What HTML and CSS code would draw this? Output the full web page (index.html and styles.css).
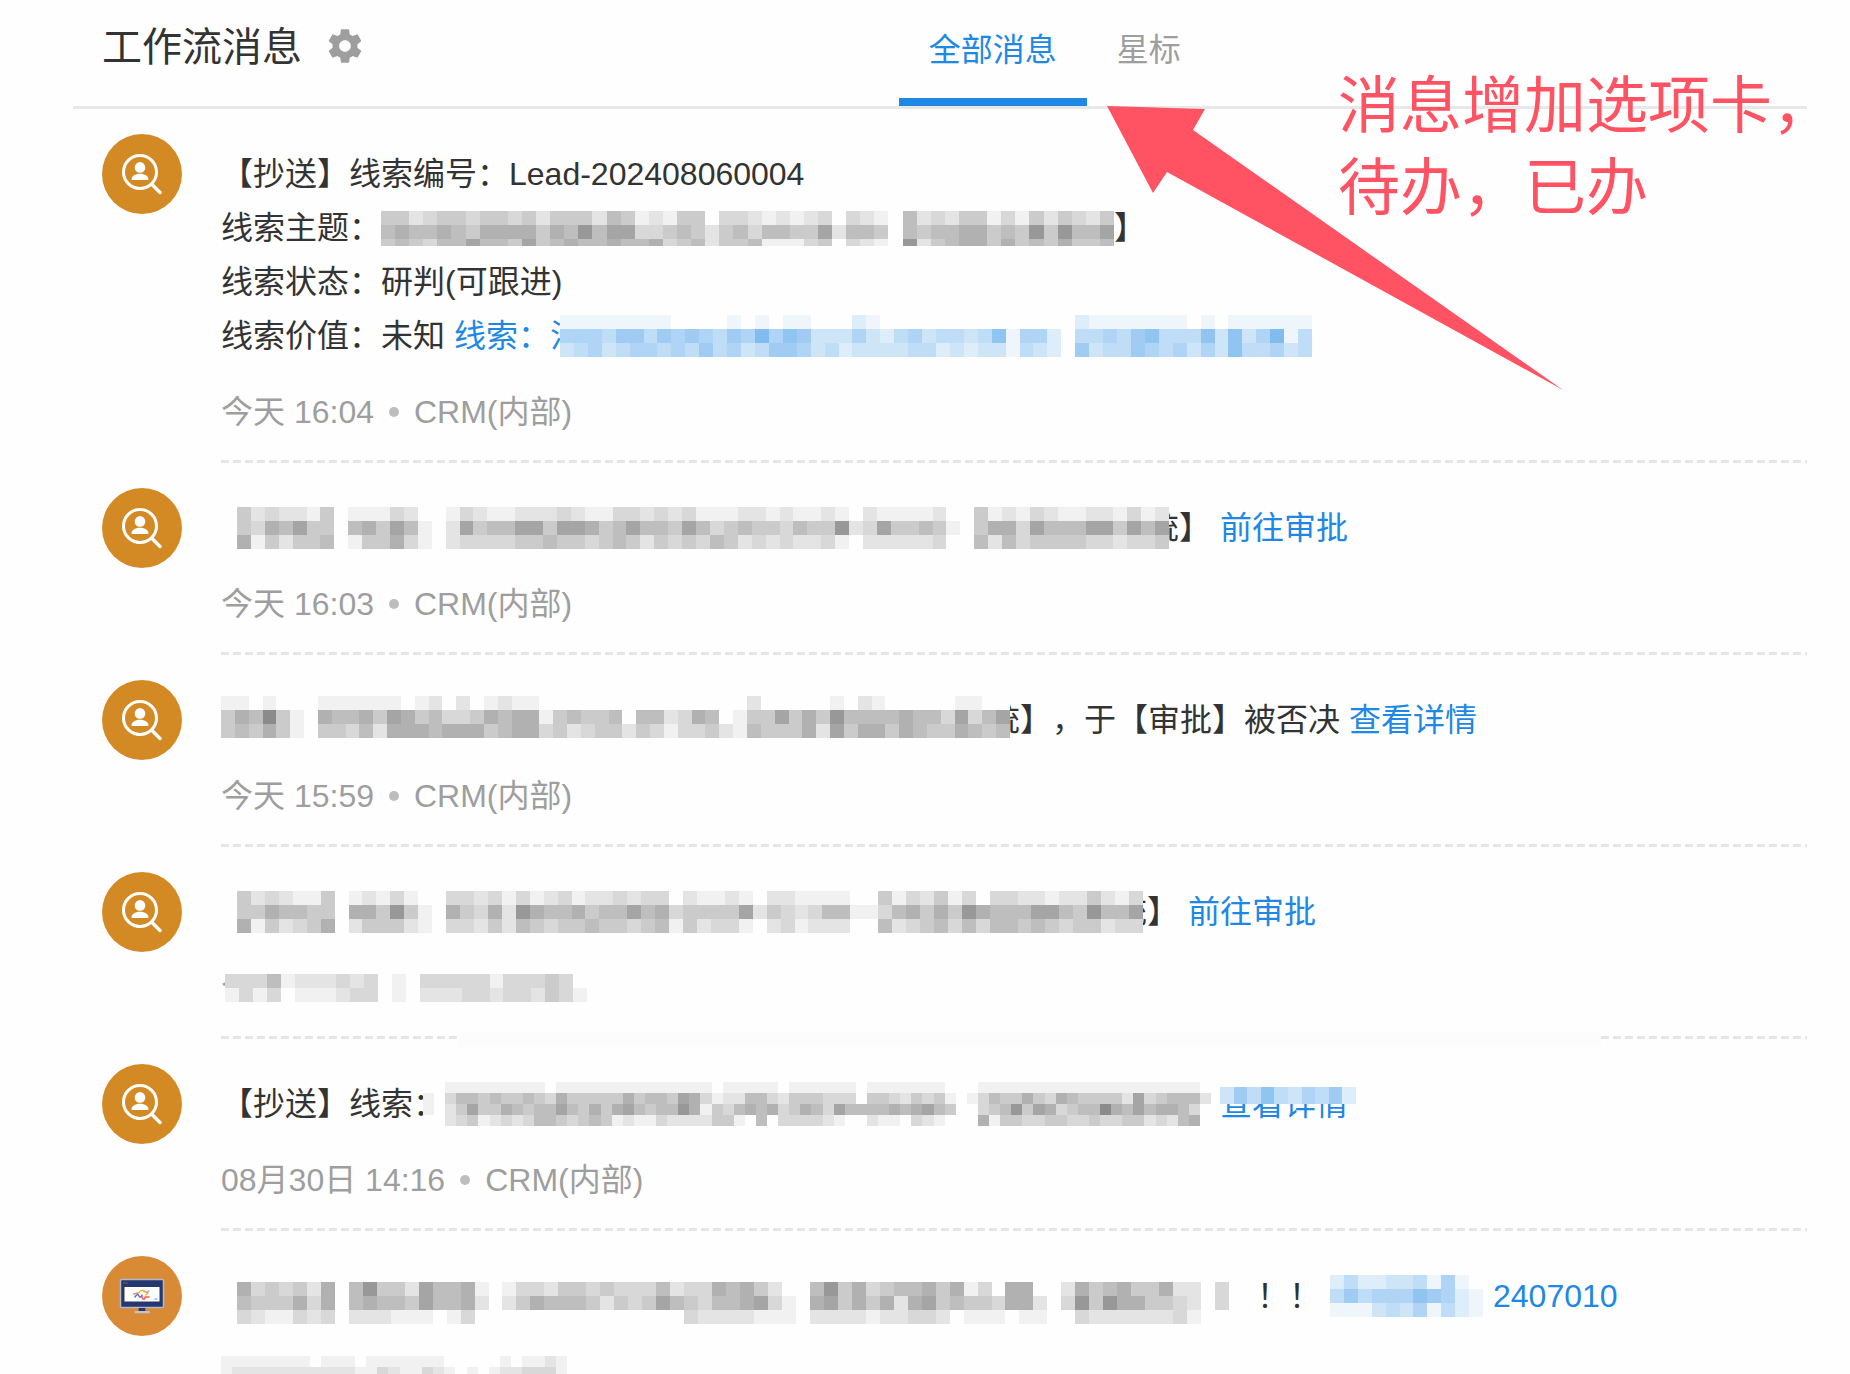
FILE: index.html
```
<!DOCTYPE html>
<html lang="zh-CN">
<head>
    <meta charset="UTF-8">
    <meta name="viewport" content="width=device-width, initial-scale=1.0">
    <title>工作流消息</title>
    <link rel="stylesheet" href="styles.css">
</head>
<body>
    <svg class="defs" aria-hidden="true">
        <symbol id="icon-lead" viewBox="0 0 80 80">
            <circle cx="40" cy="40" r="40" fill="#d38a25"/>
            <circle cx="38" cy="38" r="16.500" fill="none" stroke="#fff" stroke-width="3"/>
            <path d="M50 50.500l8 8" stroke="#fff" stroke-width="3.400" stroke-linecap="round"/>
            <circle cx="38" cy="33.400" r="5.300" fill="#fff"/>
            <path d="M29.600 46v-1c0-3.600 5-5.300 8.400-5.300s8.400 1.700 8.400 5.300v1z" fill="#fff"/>
        </symbol>
    </svg>

    <div class="panel">
        <header class="header">
            <div class="header-left">
                <h1>工作流消息</h1>
                <button type="button" class="btn-setting" aria-label="设置">
                    <svg viewBox="0 0 24 24" width="40" height="40">
                        <path fill="#9e9e9e" d="M19.430 12.980c.04-.32.07-.64.07-.98s-.03-.66-.07-.98l2.110-1.650c.19-.15.24-.42.12-.64l-2-3.460c-.12-.22-.39-.3-.61-.22l-2.490 1c-.52-.4-1.080-.73-1.690-.98l-.38-2.650C14.460 2.180 14.250 2 14 2h-4c-.25 0-.46.18-.49.42l-.38 2.650c-.61.25-1.170.59-1.690.98l-2.490-1c-.23-.09-.49 0-.61.22l-2 3.460c-.13.22-.07.49.12.64l2.110 1.650c-.04.32-.07.65-.07.98s.03.66.07.98l-2.110 1.650c-.19.15-.24.42-.12.64l2 3.460c.12.22.39.3.61.22l2.490-1c.52.4 1.080.73 1.690.98l.38 2.650c.03.24.24.42.49.42h4c.25 0 .46-.18.49-.42l.38-2.650c.61-.25 1.170-.59 1.690-.98l2.490 1c.23.09.49 0 .61-.22l2-3.460c.12-.22.07-.49-.12-.64l-2.110-1.650zM12 15.500c-1.930 0-3.500-1.570-3.500-3.500s1.570-3.500 3.500-3.500 3.500 1.570 3.500 3.500-1.570 3.500-3.500 3.500z"/>
                    </svg>
                </button>
            </div>
            <nav class="tabs">
                <button type="button" class="tab active">全部消息</button>
                <button type="button" class="tab">星标</button>
            </nav>
        </header>

        <ul class="list">
            <li class="item">
                <svg class="avatar"><use href="#icon-lead"/></svg>
                <div class="item-body">
                    <p class="line">【抄送】线索编号：Lead-202408060004</p>
                    <p class="line">线索主题：<svg class="mosaic" data-width="733" data-heights="14,14,7" data-rows="44234434434244425412144.33212123.321.523244131424324|565565466664658577334542453554472554.545566454848557|45435575547456556556345244511134.321.824566464546445"></svg>】</p>
                    <p class="line">线索状态：研判(可跟进)</p>
                    <p class="line">线索价值：未知<a href="#">线索：<span class="under under-start">江</span><svg class="mosaic blue" data-width="752" data-heights="14,14,14" data-rows="11111111....1.1.11...21..............21111111.1.111111|555466465654658576333532453443471552.44546744473735814|345345545464534665342333344232331432.63446545353744534"></svg></a></p>
                    <p class="meta">今天 16:04<i class="dot"></i>CRM(内部)</p>
                </div>
            </li>
            <li class="item">
                <svg class="avatar"><use href="#icon-lead"/></svg>
                <div class="item-body">
                    <p class="line indent"><svg class="mosaic" data-width="932" data-heights="14,14,14" data-rows="4232214.11132..13211222321133232311122121121.211112..41213211221312|4365744.564751.2745577477645755475345443544823744541.46637555774757|6142445.144631.23333445443454243435423232231.222223..52534444332334"></svg><span class="under">统</span>】<a href="#">前往审批</a></p>
                    <p class="meta">今天 16:03<i class="dot"></i>CRM(内部)</p>
                </div>
            </li>
            <li class="item">
                <svg class="avatar"><use href="#icon-lead"/></svg>
                <div class="item-body">
                    <p class="line"><svg class="mosaic" data-width="789" data-heights="14,14,14,7" data-rows="11.1...111111.12.2.1211...............2.....1.21.....11..|465941.6556476453346566145445.552365.14474648555565537357|454641.44352666566645663423442431334215444627466465446545|."></svg><span class="under">统</span>】，于【审批】被否决<a href="#">查看详情</a></p>
                    <p class="meta">今天 15:59<i class="dot"></i>CRM(内部)</p>
                </div>
            </li>
            <li class="item smudged">
                <svg class="avatar"><use href="#icon-lead"/></svg>
                <div class="item-body">
                    <p class="line indent"><svg class="mosaic" data-width="906" data-heights="14,14,14" data-rows="4232114.12131..3323131231223233.21121.221111..4132413.33221224213|4465544.664841.6436286556455756344447243235511356464865557754855 7|6142346.244421.3324254344544345142331.231222..5234535355454344233"></svg><span class="under under-thin">统</span>】<a href="#">前往审批</a></p>
                    <p class="meta"><span class="under under-thin under-start">今</span><svg class="mosaic" data-width="362" data-heights="7,14,14,7" data-rows="..........................|33351222323.1.33333133343.|1313.111233.1.222332332431|."></svg></p>
                </div>
            </li>
            <li class="item">
                <svg class="avatar"><use href="#icon-lead"/></svg>
                <div class="item-body">
                    <p class="line">【抄送】线索<span class="under under-start">：</span><svg class="mosaic" data-width="788" data-heights="11,11,11,11" data-rows="..111111111.11111111111111.11111.111111.1111111...11111111111111111111.|1.3554544543644444645547631225532444333.44324341.1354464365444427345552|1.2474465455754646754558614356563465375555656754..34584763455965756653.|..234123235543454121132222441.5.333321..211.321...61443344334334423256."></svg><a href="#" class="covered">查看详情<svg class="mosaic blue" data-width="136" data-heights="17" data-rows="3647435462"></svg></a></p>
                    <p class="meta">08月30日 14:16<i class="dot"></i>CRM(内部)</p>
                </div>
            </li>
            <li class="item">
                <svg class="avatar" viewBox="0 0 80 80">
                    <circle cx="40" cy="40" r="40" fill="#d98a35"/>
                    <rect x="18.500" y="23.500" width="43" height="28" rx="1" fill="#26376f" stroke="#b3b9cc" stroke-width="1.500"/>
                    <path d="M21 26h5v2h-5z" fill="#4a4d55"/>
                    <path d="M22.500 31h35v14.500h-35z" fill="#fff"/>
                    <path d="M36.700 52h6.600v3.500h-6.600z" fill="#26376f"/>
                    <path d="M32.700 55h15v2.300h-15z" fill="#c3c2c8"/>
                    <g fill="none" stroke-width="1.500" stroke-linecap="round">
                        <path d="M32 38l4-1M42 35l3 2" stroke="#f08a4b"/>
                        <path d="M33 41c2-3 3-3 4-1s2 1 3-1" stroke="#4d6fe0"/>
                        <path d="M37 37c2-4 5-3 5-1M44 39l2-2" stroke="#f7b733"/>
                        <path d="M40 40c0 4 3 4 3 1M44 41h3" stroke="#ee5a4f"/>
                        <path d="M45 36l2-1M53 43h2" stroke="#9db4ea"/>
                    </g>
                </svg>
                <div class="item-body">
                    <p class="line indent"><svg class="mosaic" data-width="1020" data-heights="14,14,14,14" data-rows=".|6343426.5844275561.13324434333523365642..5846345564613.66..2645644622.3..|5444636.5655475562.246555424347543556731.67464626745443662.3848664432.3..|3211323.222111.13...............32222111.2222122332.111.11..322222231...."></svg>！！<a href="#"><svg class="mosaic blue" data-width="153" data-heights="14,14,14" data-rows="2422334151.|46455576521|11134351421"></svg><span class="code">2407010</span></a></p>
                    <p class="meta"><svg class="mosaic" data-width="346" data-heights="11,11,11,11,11" data-rows="...............................|11111111.111.1111111.....1.1121|1222222222221132113210101223331|1222222222221132113210101223331|1111111111111111111110101111111"></svg></p>
                </div>
            </li>
        </ul>
    </div>

    <div class="note">
        <svg class="note-arrow" width="456" height="284" viewBox="0 0 456 284">
            <path d="M0 0l98 3-12 21 370 260L60 66 46 87z" fill="#ff5263"/>
        </svg>
        <p class="note-text">消息增加选项卡，<br>待办，已办</p>
    </div>

    <script src="mosaic.js"></script>
</body>
</html>
```
FILE: styles.css
```
* {
    box-sizing: border-box;
}
body {
    margin: 0;
    background-color: #fefefe;
    color: #333;
    font-family: "Liberation Sans", "Noto Sans CJK SC", sans-serif;
    font-size: 32px;
    text-spacing-trim: space-all;
}
h1, p, ul {
    margin: 0;
    padding: 0;
}
a {
    color: #1e88e5;
    text-decoration: none;
}
button {
    padding: 0;
    border: none;
    background: none;
    font: inherit;
    cursor: pointer;
}
.defs {
    display: none;
}
.panel {
    height: 100vh;
    padding: 0 43px 0 73px;
    overflow: hidden;
}

/* header */
.header {
    display: grid;
    grid-template-columns: 10fr 11fr;
    border-bottom: 3px solid #e8e8e8;
}
.header-left {
    display: flex;
    align-items: center;
    gap: 23px;
    padding: 0 0 14px 29px;
}
.header h1 {
    padding-top: 2px;
    font-size: 40px;
    font-weight: normal;
    line-height: 60px;
}
.btn-setting svg {
    display: block;
}
.tabs {
    display: flex;
}
.tab {
    padding: 2px 30px 0;
    border-bottom: 8px solid transparent;
    color: #9e9e9e;
    line-height: 96px;
}
.tab.active {
    border-bottom-color: #1e88e5;
    color: #1e88e5;
}

/* message list */
.list {
    padding-left: 29px;
    list-style: none;
}
.item {
    display: flex;
    gap: 39px;
    padding-top: 25px;
}
.avatar {
    flex: none;
    width: 80px;
    height: 80px;
}
.item-body {
    position: relative;
    flex: 1;
    min-width: 0;
    padding: 13px 0 31px;
    background: repeating-linear-gradient(90deg, #e6e6e6 0 8px, transparent 8px 12px) left bottom / 100% 3px no-repeat;
}
.line {
    display: flex;
    align-items: center;
    height: 54px;
    line-height: 54px;
    white-space: nowrap;
}
.line a {
    display: flex;
    align-items: center;
    margin-left: 9px;
}
.indent {
    padding-left: 16px;
}
.meta {
    display: flex;
    align-items: center;
    height: 40px;
    margin-top: 29px;
    color: #9e9e9e;
    line-height: 40px;
    white-space: nowrap;
}
.dot {
    width: 10px;
    height: 10px;
    margin: 0 15px;
    border-radius: 50%;
    background-color: #bdbdbd;
}
.code {
    margin-left: 10px;
}

/* masked text */
.mosaic {
    position: relative;
    z-index: 1;
    flex: none;
    background-color: #fefefe;
    color: #000;
}
.mosaic.blue {
    color: #1e88e5;
}
/* character that runs on below the mosaic next to it */
.under {
    display: flex;
    justify-content: flex-end;
    width: 10px;
}
.under-start {
    justify-content: flex-start;
}
.under-thin {
    width: 4px;
}
.covered {
    position: relative;
}
.covered .mosaic {
    position: absolute;
    top: 10px;
    left: 0;
}
.smudged .item-body::after {
    content: "";
    position: absolute;
    right: 206px;
    bottom: -8px;
    left: 237px;
    height: 15px;
    background-color: #fcfcfc;
}

/* annotation */
.note {
    color: #ff5263;
}
.note-arrow {
    position: absolute;
    top: 106px;
    right: 287px;
}
.note-text {
    position: absolute;
    top: 66px;
    right: 16px;
    font-size: 62px;
    line-height: 82px;
    white-space: nowrap;
}
```
FILE: mosaic.js
```
// each digit is the strength of one cell, "." is an empty cell
document.querySelectorAll(".mosaic").forEach(function (svg) {
    var rows = svg.dataset.rows.replace(/ /g, "").split("|");
    var heights = svg.dataset.heights.split(",").map(Number);
    var step = svg.classList.contains("blue") ? 0.07 : 0.05;
    var cols = Math.max.apply(null, rows.map(function (r) { return r.length; }));
    var total = heights.reduce(function (a, b) { return a + b; }, 0);
    var y = 0;

    svg.setAttribute("viewBox", "0 0 " + cols + " " + total);
    svg.setAttribute("width", svg.dataset.width);
    svg.setAttribute("height", total);
    svg.setAttribute("preserveAspectRatio", "none");
    svg.setAttribute("shape-rendering", "crispEdges");

    rows.forEach(function (row, i) {
        row.split("").forEach(function (level, x) {
            if (level === ".") return;
            var rect = document.createElementNS("http://www.w3.org/2000/svg", "rect");
            rect.setAttribute("x", x);
            rect.setAttribute("y", y);
            rect.setAttribute("width", 1);
            rect.setAttribute("height", heights[i]);
            rect.setAttribute("fill", "currentColor");
            rect.setAttribute("fill-opacity", level * step);
            svg.appendChild(rect);
        });
        y += heights[i];
    });
});
```
